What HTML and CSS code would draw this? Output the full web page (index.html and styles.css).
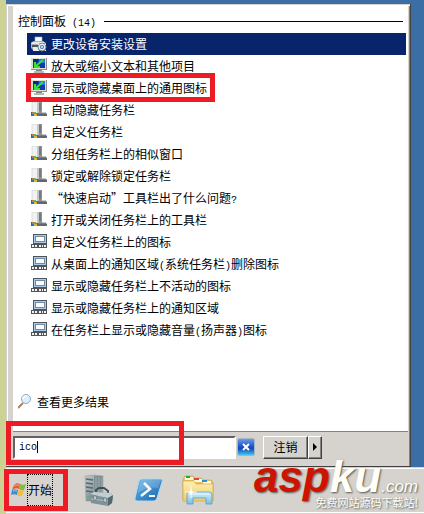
FILE: index.html
```html
<!DOCTYPE html>
<html lang="zh-CN">
<head>
<meta charset="utf-8">
<title>开始菜单</title>
<link rel="stylesheet" href="styles.css">
</head>
<body>
<svg class="defs" aria-hidden="true">
  <defs>
    <linearGradient id="g-server" x1="0" x2="1" y1="0" y2="0"><stop offset="0" stop-color="#fff"/><stop offset=".55" stop-color="#d5d9dc"/><stop offset="1" stop-color="#777d82"/></linearGradient>
    <linearGradient id="g-tower" x1="0" x2="1" y1="0" y2="1"><stop offset="0" stop-color="#c4cccd"/><stop offset="1" stop-color="#5f7075"/></linearGradient>
    <linearGradient id="g-shell" x1="0" x2="1" y1="0" y2="1"><stop offset="0" stop-color="#68b5e6"/><stop offset="1" stop-color="#1764ac"/></linearGradient>
    <linearGradient id="g-folder" x1="0" x2="0" y1="0" y2="1"><stop offset="0" stop-color="#fdf0b0"/><stop offset="1" stop-color="#edcc6c"/></linearGradient>
    <linearGradient id="g-holder" x1="0" x2="0" y1="0" y2="1"><stop offset="0" stop-color="#d3effb"/><stop offset="1" stop-color="#79bfe2"/></linearGradient>
    <symbol id="printer" viewBox="0 0 16 16">
      <path d="M4 1h7v5H4z" fill="#f5f9fc" stroke="#9db1c6" stroke-width=".6"/>
      <path d="M1 6l2-1h9l3 2v6l-2 1H2l-2-2V7z" fill="#a9b0b5"/><path d="M1 6h12l1 2H0z" fill="#e5e8ea"/>
      <path d="M1 9h6v2H1z" fill="#4b565d"/><path d="M2 11h6l-1 4H2z" fill="#e9edf0"/>
      <circle cx="11" cy="11" r="4" fill="#e8edf0" stroke="#748089"/><circle cx="11" cy="11" r="2" fill="#467b9d"/><circle cx="11" cy="11" r="1" fill="#dff1fa"/>
      <path d="M11 6v1M15 8l-1 1M7 8l1 1M8 14l-1 1M14 14l1 1" stroke="#e8edf0"/>
    </symbol>
    <symbol id="display" viewBox="0 0 16 16">
      <path d="M0 0h16v12H0z" fill="#8d9088"/><path d="M0 0h15v11H0z" fill="#deded2"/><path d="M2 1h12v9H2z" fill="#1237b5"/>
      <path d="M8 1h6v4H8z" fill="#247be0"/><path d="M2 1h5v3H2z" fill="#082a82"/>
      <path d="M12 2L5 8M4 4v5h5" fill="none" stroke="#35e529" stroke-width="2"/>
      <path d="M5 12h6v2H5z" fill="#7c857f"/><path d="M3 13h10v2H3z" fill="#b4b9b0"/>
    </symbol>
    <symbol id="server" viewBox="0 0 16 16">
      <path d="M1 0h6v13H1z" fill="#f1f2f3" stroke="#c9cdd0" stroke-width=".6"/>
      <path d="M6 0h5v12H6z" fill="#8d9195"/><path d="M6 0h2v12H6z" fill="#c3c7ca"/><path d="M8 2h2M8 4h2M8 6h2M8 8h2" stroke="#5f6469"/>
      <path d="M3 11h12l1 1v2H3z" fill="#62676c"/><path d="M7 11h8" stroke="#8f9498"/>
      <path d="M1 10h2v2H1z" fill="#dd7137"/><path d="M3 10h2v2H3z" fill="#69b64b"/><path d="M1 12h2v2H1z" fill="#1879c5"/><path d="M3 12h3v2H3z" fill="#d9b83c"/><path d="M0 10h1v4H0z" fill="#2c69a8"/>
    </symbol>
    <symbol id="tray" viewBox="0 0 16 16">
      <path d="M2 0h14v10H2z" fill="#4b555c"/><path d="M3 1h12v8H3z" fill="#a9ccf2"/><path d="M4 2h10v6H4z" fill="#7089a8"/><path d="M5 3h8v4H5z" fill="#fff"/>
      <path d="M0 10h16v4H0z" fill="#545454"/><path d="M1 11h2v2H1zM4 11h2v2H4zM8 11h2v2H8zM11 11h1v2h-1zM13 11h2v2h-2z" fill="#f5f5f5"/>
    </symbol>
    <symbol id="flag" viewBox="0 0 16 16">
      <path d="M3 3c2-2 4-2 6-1L8 7C6 6 4 6 1 8z" fill="#df622c"/><path d="M9 2c2 1 4 1 6 0l-2 6c-2 1-3 0-5-1z" fill="#86b944"/>
      <path d="M1 8c2-1 4-1 6 0l-1 5c-2-1-4-1-6 0z" fill="#428bd1"/><path d="M8 8c2 1 3 1 5 0l-2 6c-2 1-3 0-5-1z" fill="#f4be35"/>
      <path d="M3 4c2-1 3-1 5-1M2 9c2-1 3 0 4 0" fill="none" stroke="#fff" stroke-opacity=".5"/>
    </symbol>
  </defs>
</svg>
<div class="screen">
  <main class="menu">
    <section class="results">
      <h1 class="heading"><span>控制面板<span class="half"> (14)</span></span></h1>
      <ul class="list">
        <li><a href="#" class="item selected"><svg class="icon"><use href="#printer"/></svg>更改设备安装设置</a></li>
        <li><a href="#" class="item"><svg class="icon"><use href="#display"/></svg>放大或缩小文本和其他项目</a></li>
        <li class="marked"><a href="#" class="item"><svg class="icon"><use href="#display"/></svg>显示或隐藏桌面上的通用图标</a></li>
        <li><a href="#" class="item"><svg class="icon"><use href="#server"/></svg>自动隐藏任务栏</a></li>
        <li><a href="#" class="item"><svg class="icon"><use href="#server"/></svg>自定义任务栏</a></li>
        <li><a href="#" class="item"><svg class="icon"><use href="#server"/></svg>分组任务栏上的相似窗口</a></li>
        <li><a href="#" class="item"><svg class="icon"><use href="#server"/></svg>锁定或解除锁定任务栏</a></li>
        <li><a href="#" class="item"><svg class="icon"><use href="#server"/></svg><span>“快速启动”工具栏出了什么问题<span class="half">?</span></span></a></li>
        <li><a href="#" class="item"><svg class="icon"><use href="#server"/></svg>打开或关闭任务栏上的工具栏</a></li>
        <li><a href="#" class="item"><svg class="icon"><use href="#tray"/></svg>自定义任务栏上的图标</a></li>
        <li><a href="#" class="item"><svg class="icon"><use href="#tray"/></svg><span>从桌面上的通知区域<span class="half">(</span>系统任务栏<span class="half">)</span>删除图标</span></a></li>
        <li><a href="#" class="item"><svg class="icon"><use href="#tray"/></svg>显示或隐藏任务栏上不活动的图标</a></li>
        <li><a href="#" class="item"><svg class="icon"><use href="#tray"/></svg>显示或隐藏任务栏上的通知区域</a></li>
        <li><a href="#" class="item"><svg class="icon"><use href="#tray"/></svg><span>在任务栏上显示或隐藏音量<span class="half">(</span>扬声器<span class="half">)</span>图标</span></a></li>
      </ul>
      <a href="#" class="more">
        <svg class="icon" viewBox="0 0 16 16"><path d="M5 9l-5 5" stroke="#a0856a" stroke-width="2"/><circle cx="8" cy="5" r="4.500" fill="#dceffc" stroke="#91a9bd"/><path d="M5 5c0-2 2-3 4-3" fill="none" stroke="#fff" stroke-width="1.500"/></svg>
        查看更多结果
      </a>
    </section>
    <div class="controls">
      <input class="search" type="text" value="ico" aria-label="搜索程序和文件">
      <button class="clear" type="button" aria-label="清除"><svg viewBox="0 0 16 16"><path d="M5 5l6 6M11 5l-6 6" stroke="#fff" stroke-width="2"/></svg></button>
      <button class="raised logoff" type="button">注销</button>
      <button class="raised options" type="button" aria-label="更多选项"><svg viewBox="0 0 4 8"><path d="M0 0l4 4-4 4z"/></svg></button>
    </div>
    <div class="search-mark"></div>
  </main>
  <footer class="taskbar">
    <button class="start" type="button"><svg class="icon"><use href="#flag"/></svg><span class="start-label">开始</span></button>
    <button class="pin" type="button" aria-label="服务器管理器">
      <svg viewBox="0 0 32 32"><path d="M3 2l9-1 9 1v25H4z" fill="url(#g-tower)" stroke="#89979a" stroke-width=".5"/><path d="M12 2h9v24h-9z" fill="#7e8f92"/><path d="M4 5l7 1M4 9l7 1M4 13l7 1M4 17l7 1" stroke="#556970" stroke-width="1.500"/><path d="M14 3v22M17 3v22M20 3v22" stroke="#a9b6b7" stroke-width=".8"/><path d="M5 22h3v2H5z" fill="#52bc63"/>
      <path d="M14 18v-2l3-2h5l4 3v3" fill="none" stroke="#3f5157" stroke-width="2"/><path d="M8 20l4-2 17 1 2 3-1 7-4 3-17-3z" fill="#7f9299"/><path d="M8 20l4-2 17 1 2 3-5 2z" fill="#c2cdd0"/><path d="M26 24l5-3-1 8-4 3z" fill="#526970"/><path d="M9 25l17 2" stroke="#b0bec2"/><path d="M12 22h2v4h-2zM22 24h2v4h-2z" fill="#e2e7e8" stroke="#506065" stroke-width=".5"/></svg>
    </button>
    <button class="pin" type="button" aria-label="PowerShell">
      <svg viewBox="0 0 32 32"><path d="M9 5h20q2 0 1 3l-5 16q-1 3-3 3H5q-3 0-2-3L7 7q1-2 2-2z" fill="url(#g-shell)" stroke="#a9ddf5"/><path d="M9 6h20l-3 8Q17 12 6 19L8 8z" fill="#fff" opacity=".18"/><path d="M12 9l6 6-9 7" fill="none" stroke="#f4fbff" stroke-width="2.500"/><path d="M17 22h6" stroke="#f4fbff" stroke-width="2"/></svg>
    </button>
    <button class="pin" type="button" aria-label="资源管理器">
      <svg viewBox="0 0 32 32"><path d="M1 5l2-3h8l2 2h6l2 2h8l2 2v18H1z" fill="#e8c360" stroke="#c79d43" stroke-width=".6"/><path d="M3 3h8v3H3zM12 5h8v3h-8zM21 7h8v3h-8z" fill="#fff8dc"/><path d="M4 2h4v2H4z" fill="#21a841"/><path d="M12 4h5v2h-5z" fill="#dd4a31"/><path d="M20 6h5v2h-5z" fill="#2b91d5"/><path d="M1 7h11l2 3h17v17H1z" fill="url(#g-folder)" stroke="#c99f45" stroke-width=".6"/>
      <path d="M5 30V20q0-2 3-2h19q3 0 3 3v9h-6v-6H11v6z" fill="url(#g-holder)" stroke="#579ec8" stroke-width=".8"/><path d="M7 20h20" stroke="#fff" opacity=".7"/><path d="M9 12v12M3 18h12" stroke="#fffbe6" stroke-width="1"/><path d="M9 15l1 2 2 1-2 1-1 2-1-2-2-1 2-1z" fill="#fff"/></svg>
    </button>
    <div class="watermark">
      <div class="brand"><span class="red">asp</span>ku<span class="domain">.com</span></div>
      <div class="slogan">免费网站源码下载站!</div>
    </div>
  </footer>
</div>
</body>
</html>
```
FILE: styles.css
```css
*, *::before, *::after { box-sizing: border-box; }

body {
  margin: 0;
  background: #ccd194;
  color: #000;
  font: 12px/16px "Noto Sans CJK SC", sans-serif;
}

button, input { font: inherit; color: inherit; margin: 0; }
a { color: inherit; text-decoration: none; }
.defs { position: absolute; width: 0; height: 0; }
.icon { width: 16px; height: 16px; flex: none; }
.half { font: 10px/10px "Liberation Mono", monospace; white-space: pre; }

.screen {
  display: flex;
  flex-direction: column;
  min-height: 100vh;
  margin-left: 6px;
  padding-top: 4px;
  background: #3a6ea5;
}

.menu {
  position: relative;
  margin-right: 13px;
  padding: 2px 2px 0 7px;
  background: #d6d3ce;
  border: solid #424142;
  border-width: 0 1px 1px 0;
  box-shadow: inset 1px 1px #d6d3ce, inset 2px 2px #fff, inset -1px 0 #848284;
}

.results {
  padding: 7px 2px 21px 5px;
  background: #fff;
  border-bottom: 1px solid #848284;
}

.heading {
  display: flex;
  align-items: center;
  gap: 8px;
  height: 16px;
  margin: 0 3px 4px 0;
  font-size: 12px;
  font-weight: 400;
}
.heading::after { content: ""; flex: 1; height: 1px; background: #000; }

.list { margin: 0; padding: 0 0 0 9px; list-style: none; }
.item {
  display: flex;
  align-items: center;
  gap: 4px;
  height: 22px;
  padding-left: 4px;
  white-space: nowrap;
}
.selected { background: #08246b; color: #fff; }
.marked { position: relative; }
.marked::after {
  content: "";
  position: absolute;
  inset: -4px auto -3px -1px;
  width: 189px;
  border: 5px solid #ed1c24;
}

.more {
  display: flex;
  gap: 3px;
  margin-top: 53px;
  align-items: center;
}

.controls { display: flex; align-items: center; height: 34px; padding-bottom: 4px; }
.search {
  flex: 1;
  min-width: 0;
  height: 23px;
  padding: 0 4px;
  border: 2px solid;
  border-color: #636163 #fff #fff #636163;
  background: linear-gradient(#000, #000) 22px center / 1px 12px no-repeat #fff;
  font: 10px/16px "Liberation Mono", monospace;
  outline: 0;
}
.clear {
  width: 18px;
  height: 18px;
  margin-left: 1px;
  padding: 0;
  border: 1px solid #a5b6c6;
  border-radius: 2px;
  background: linear-gradient(#6d9bea, #174ec4 50%, #1747bd 60%, #40c5f0);
}
.clear svg { display: block; width: 16px; height: 16px; }
.raised {
  height: 23px;
  padding: 0;
  border: 1px solid;
  border-color: #fff #424142 #424142 #fff;
  background: #d6d3ce;
  box-shadow: inset -1px -1px #848284;
}
.logoff { width: 45px; margin-left: 8px; }
.options { width: 14px; margin-right: 86px; }
.options svg { display: block; width: 4px; height: 8px; margin: auto; }

.search-mark {
  position: absolute;
  left: 0;
  bottom: 1px;
  width: 178px;
  height: 44px;
  border: 5px solid #ed1c24;
}

.taskbar {
  position: relative;
  flex: 1;
  display: flex;
  align-items: center;
  gap: 18px;
  padding: 1px 0 3px;
  border-top: 1px solid #d6d3ce;
  background: #d6d3ce;
  box-shadow: inset 0 1px #fff, inset 0 -1px #d6d3ce, inset 0 -2px #fff;
}
.start {
  display: flex;
  align-items: center;
  width: 64px;
  height: 42px;
  margin: 0 -4px 0 -2px;
  padding: 0 0 0 2px;
  border: 5px solid #ed1c24;
  background: #d6d3ce;
}
.start-label { height: 32px; border: 1px dotted #000; line-height: 30px; }
.pin { width: 32px; height: 32px; padding: 0; border: 0; background: none; }
.pin svg { display: block; width: 32px; height: 32px; }

.watermark {
  position: absolute;
  right: 6px;
  bottom: 5px;
  color: #fffff7;
  text-align: right;
  text-shadow: 1px 1px 2px #555;
  white-space: nowrap;
}
.brand { font: italic bold 44px/32px "Liberation Sans", sans-serif; }
.red { color: #ce1400; }
.domain { font-size: 17px; font-weight: 400; line-height: 17px; }
.slogan { font-size: 11px; line-height: 14px; }
```
